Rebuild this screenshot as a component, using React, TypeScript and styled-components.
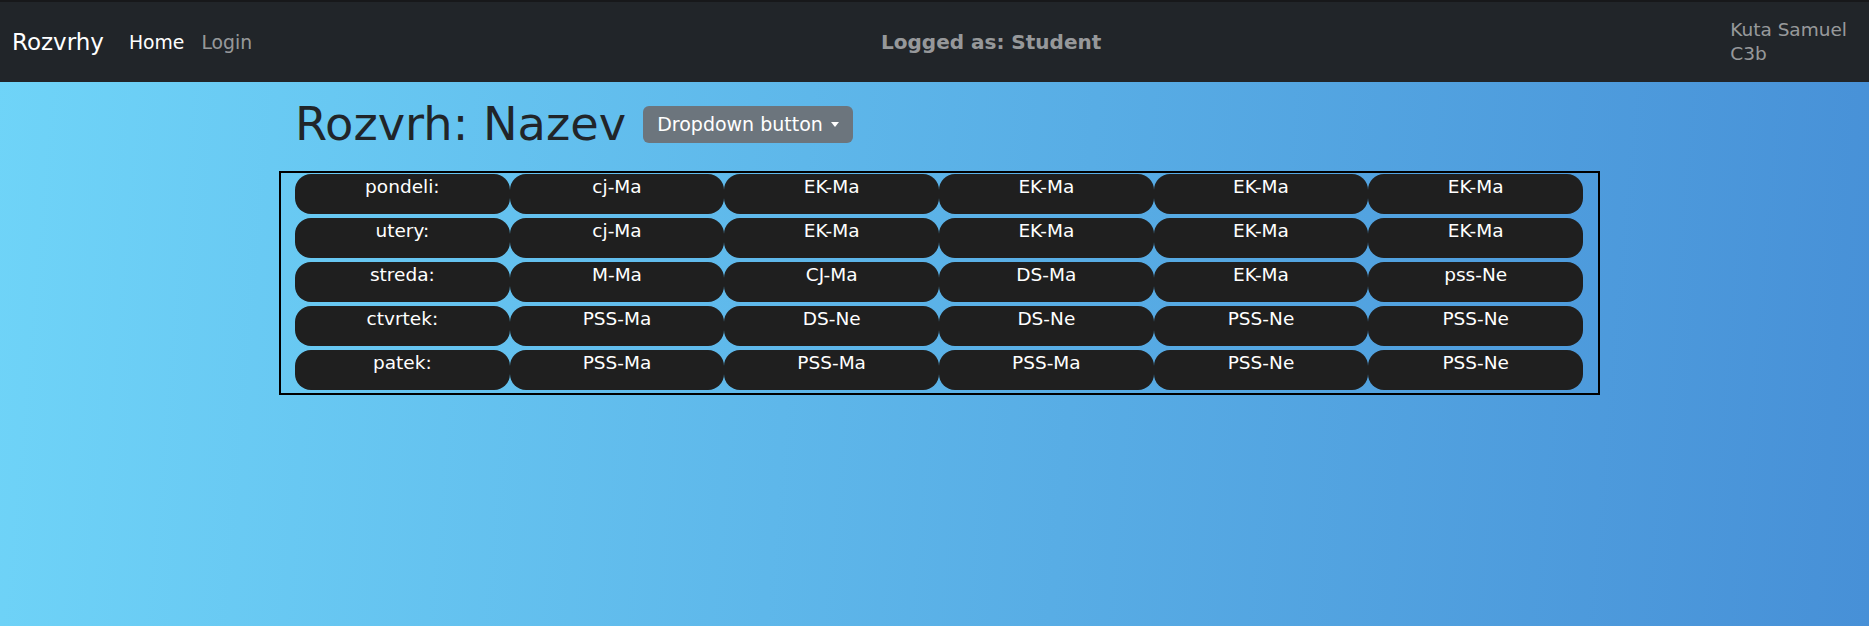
import React from "react"
import styled, { createGlobalStyle } from "styled-components"

const GlobalStyle = createGlobalStyle`
  html, body {
    margin: 0;
    padding: 0;
  }
  body {
    min-height: 100vh;
    font-family: "DejaVu Sans", "Liberation Sans", sans-serif;
    background: linear-gradient(95deg, #6fd4f8 0%, #4790d7 100%);
  }
`

const Page = styled.div`
  min-height: 626px;
  display: flex;
  flex-direction: column;
`

const Navbar = styled.nav`
  display: flex;
  align-items: center;
  height: 80px;
  padding: 0 22px 0 12px;
  background: #212529;
  border-top: 2px solid #17181a;
`

const Brand = styled.span`
  color: #fff;
  font-size: 23px;
  margin-right: 25px;
`

const NavLinks = styled.div`
  display: flex;
  gap: 17px;
`

const NavLink = styled.a<{ $active?: boolean }>`
  font-size: 18.8px;
  color: ${(p) => (p.$active ? "#fff" : "rgba(255, 255, 255, 0.55)")};
  text-decoration: none;
  cursor: pointer;
`

const LoggedAs = styled.span`
  margin-left: auto;
  font-size: 20px;
  font-weight: bold;
  color: rgba(255, 255, 255, 0.55);
`

const UserInfo = styled.div`
  margin-left: auto;
  display: flex;
  flex-direction: column;
  font-size: 18.5px;
  line-height: 24px;
  color: rgba(255, 255, 255, 0.55);
`

const Main = styled.main`
  width: 1321px;
  margin: 15px 0 0 279px;
`

const TitleRow = styled.div`
  display: flex;
  align-items: center;
  gap: 17px;
  padding-left: 16px;
  margin-bottom: 20px;
`

const Title = styled.h1`
  margin: 0;
  font-size: 46.3px;
  font-weight: normal;
  line-height: 54px;
  color: #212529;
`

const DropdownButton = styled.button`
  display: flex;
  align-items: center;
  gap: 8px;
  height: 37px;
  padding: 0 14px;
  border: none;
  border-radius: 6px;
  background: #6c757d;
  color: #fff;
  font-family: inherit;
  font-size: 19px;
  cursor: pointer;
`

const Caret = styled.span`
  width: 0;
  height: 0;
  border-left: 4.5px solid transparent;
  border-right: 4.5px solid transparent;
  border-top: 5px solid #fff;
`

const Timetable = styled.div`
  display: grid;
  grid-template-columns: repeat(6, 1fr);
  row-gap: 4px;
  padding: 1px 15px 3px 14px;
  border: 2px solid #000;
`

const Cell = styled.div`
  height: 40px;
  padding-top: 1px;
  box-sizing: border-box;
  border-radius: 16px;
  background: #1f1f1f;
  color: #fff;
  font-size: 18.5px;
  line-height: 24px;
  text-align: center;
`

const rozvrh: [string, string[]][] = [
  ["pondeli:", ["cj-Ma", "EK-Ma", "EK-Ma", "EK-Ma", "EK-Ma"]],
  ["utery:", ["cj-Ma", "EK-Ma", "EK-Ma", "EK-Ma", "EK-Ma"]],
  ["streda:", ["M-Ma", "CJ-Ma", "DS-Ma", "EK-Ma", "pss-Ne"]],
  ["ctvrtek:", ["PSS-Ma", "DS-Ne", "DS-Ne", "PSS-Ne", "PSS-Ne"]],
  ["patek:", ["PSS-Ma", "PSS-Ma", "PSS-Ma", "PSS-Ne", "PSS-Ne"]],
]

const App = () => {
  return (
    <Page>
      <GlobalStyle />
      <Navbar>
        <Brand>Rozvrhy</Brand>
        <NavLinks>
          <NavLink $active>Home</NavLink>
          <NavLink>Login</NavLink>
        </NavLinks>
        <LoggedAs>Logged as: Student</LoggedAs>
        <UserInfo>
          <span>Kuta Samuel</span>
          <span>C3b</span>
        </UserInfo>
      </Navbar>
      <Main>
        <TitleRow>
          <Title>Rozvrh: Nazev</Title>
          <DropdownButton>
            Dropdown button
            <Caret />
          </DropdownButton>
        </TitleRow>
        <Timetable>
          {rozvrh.map(([den, hodiny]) => (
            <React.Fragment key={den}>
              <Cell>{den}</Cell>
              {hodiny.map((h, i) => (
                <Cell key={i}>{h}</Cell>
              ))}
            </React.Fragment>
          ))}
        </Timetable>
      </Main>
    </Page>
  )
}

export default App
